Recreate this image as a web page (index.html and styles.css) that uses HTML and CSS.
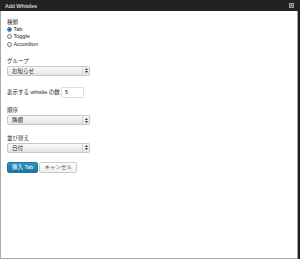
FILE: index.html
```html
<!DOCTYPE html>
<html lang="ja">
<head>
    <meta charset="UTF-8">
    <title>Add Whistles</title>
    <link rel="stylesheet" href="styles.css">
</head>
<body>
    <div class="titlebar">
        <span class="title">Add Whistles</span>
        <span class="close"><span></span></span>
    </div>
    <div class="window">
        <form class="content">
            <div class="field">
                <div class="label">種類</div>
                <label class="radio"><span class="dot checked"></span>Tab</label>
                <label class="radio"><span class="dot"></span>Toggle</label>
                <label class="radio"><span class="dot"></span>Accordion</label>
            </div>
            <div class="field">
                <div class="label">グループ</div>
                <div class="select">
                    <span class="value">お知らせ</span>
                    <span class="arrows"><svg width="3" height="5" viewBox="0 0 3 5"><path d="M1.5 0 L3 2 H0 Z M0 3 H3 L1.5 5 Z" fill="#333"/></svg></span>
                </div>
            </div>
            <div class="field inline">
                <span class="label">表示する whistle の数</span>
                <input class="number" type="text" value="5">
            </div>
            <div class="field">
                <div class="label">順序</div>
                <div class="select">
                    <span class="value">降順</span>
                    <span class="arrows"><svg width="3" height="5" viewBox="0 0 3 5"><path d="M1.5 0 L3 2 H0 Z M0 3 H3 L1.5 5 Z" fill="#333"/></svg></span>
                </div>
            </div>
            <div class="field">
                <div class="label">並び替え</div>
                <div class="select">
                    <span class="value">日付</span>
                    <span class="arrows"><svg width="3" height="5" viewBox="0 0 3 5"><path d="M1.5 0 L3 2 H0 Z M0 3 H3 L1.5 5 Z" fill="#333"/></svg></span>
                </div>
            </div>
            <div class="buttons">
                <button type="button" class="btn primary">挿入 Tab</button>
                <button type="button" class="btn">キャンセル</button>
            </div>
        </form>
    </div>
</body>
</html>
```

FILE: styles.css
```css
body {
    margin: 0;
    width: 300px;
    height: 259px;
    background: #1e1e1e;
    font-family: "Liberation Sans", "Noto Sans CJK JP", sans-serif;
    font-size: 5.5px;
    color: #222;
    overflow: hidden;
}
.titlebar {
    height: 11px;
    display: flex;
    align-items: center;
    justify-content: space-between;
    padding: 0 6px 0 5px;
    background: #222;
}
.title {
    color: #fff;
    font-size: 5.5px;
}
.close {
    width: 5px;
    height: 5px;
    box-sizing: border-box;
    border: 1px solid #999;
    background: #666;
    display: flex;
    align-items: center;
    justify-content: center;
}
.close span {
    width: 1px;
    height: 1px;
    background: #ccc;
}
.window {
    box-sizing: border-box;
    width: 298px;
    height: 248px;
    background: #fff;
    border: 1px solid #a8a8a8;
    border-top: none;
}
.content {
    padding: 7.5px 6px;
}
.field {
    margin-bottom: 9.5px;
}
.label {
    line-height: 7px;
}
.radio {
    display: flex;
    align-items: center;
    height: 7.5px;
    line-height: 7.5px;
}
.dot {
    box-sizing: border-box;
    width: 5px;
    height: 5px;
    margin-right: 1.5px;
    border: 0.5px solid #777;
    border-radius: 50%;
    background: linear-gradient(#fff, #e2e2e2);
}
.dot.checked {
    border-color: #3b78b5;
    background: radial-gradient(circle, #1e3a5c 0 0.8px, #6fb4ea 1.2px, #4a8fd1 100%);
}
.select {
    box-sizing: border-box;
    width: 83px;
    height: 10px;
    margin-top: 1px;
    display: flex;
    align-items: center;
    border: 1px solid #c8c8c8;
    border-radius: 2px;
    background: linear-gradient(#fafafa, #e4e4e4);
}
.select .value {
    flex: 1;
    padding-left: 4px;
    line-height: 8px;
}
.arrows {
    width: 6px;
    height: 8px;
    display: flex;
    align-items: center;
    justify-content: center;
    border-left: 1px solid #d4d4d4;
}
.arrows svg {
    display: block;
}
.inline {
    display: flex;
    align-items: center;
    margin-top: 11px;
}
.inline .label {
    margin-right: 1px;
}
.number {
    box-sizing: border-box;
    width: 23px;
    height: 11px;
    padding: 0 3px;
    border: 1px solid #ddd;
    border-radius: 1px;
    font: inherit;
    color: #222;
    outline: none;
}
.buttons {
    display: flex;
    gap: 1px;
}
.btn {
    box-sizing: border-box;
    height: 11px;
    padding: 0 4px;
    border: 1px solid #ccc;
    border-radius: 2px;
    background: linear-gradient(#fefefe, #f0f0f0);
    font: inherit;
    color: #555;
    line-height: 9px;
}
.btn.primary {
    border-color: #21759b;
    background: linear-gradient(#2a95c5, #21759b);
    color: #fff;
}
```
